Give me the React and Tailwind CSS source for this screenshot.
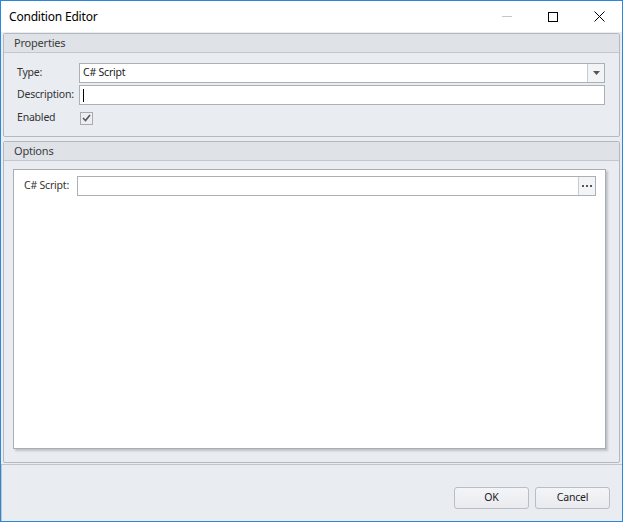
import React from "react";

const font = { fontFamily: '"Segoe UI", "Noto Sans", "Open Sans", sans-serif' };

function GroupHeader({ children }) {
  return (
    <div className="h-[19px] bg-[#dfe2e7] border-b border-[#c3c6cc] flex items-center pl-[10px] text-[11px] tracking-[-0.2px] text-[#3c3c3c]">
      {children}
    </div>
  );
}

export default function App() {
  return (
    <div
      className="w-[623px] h-[522px] border border-[#2b88d8] bg-[#e9ecf1] flex flex-col text-[#333] overflow-hidden"
      style={font}
    >
      {/* Title bar */}
      <div className="h-[31px] bg-white flex items-center relative shrink-0">
        <span className="ml-[8px] text-[12px] tracking-[-0.2px] text-black">Condition Editor</span>
        <div className="ml-auto flex items-center h-full">
          <div className="w-[46px] h-full flex items-center justify-center">
            <div className="w-[10px] h-px bg-[#c6c6c6]" />
          </div>
          <div className="w-[46px] h-full flex items-center justify-center">
            <div className="w-[10px] h-[10px] border border-black" />
          </div>
          <div className="w-[46px] h-full flex items-center justify-center">
            <svg width="11" height="11" viewBox="0 0 11 11">
              <path d="M0.5 0.5 L10.5 10.5 M10.5 0.5 L0.5 10.5" stroke="#000" strokeWidth="1" />
            </svg>
          </div>
        </div>
      </div>

      {/* Properties group */}
      <div className="mt-px mx-[2px] h-[104px] border border-[#b4b8bf] rounded-[2px] bg-[#e9ecf1] flex flex-col shrink-0">
        <GroupHeader>Properties</GroupHeader>
        <div className="flex flex-col gap-[2px] pt-[10px] pl-[13px] pr-[14px] text-[10.5px] tracking-[-0.2px]">
          <div className="flex items-center h-[20px]">
            <span className="w-[62px]">Type:</span>
            <div className="flex-1 h-[20px] bg-white border border-[#abafb6] flex items-center">
              <span className="pl-[3px] text-[#1a1a1a]">C# Script</span>
              <div className="ml-auto w-[17px] h-full border-l border-[#c8cbd0] bg-[#f3f4f6] flex items-center justify-center">
                <svg width="7" height="4" viewBox="0 0 7 4">
                  <path d="M0 0 H7 L3.5 4 Z" fill="#555" />
                </svg>
              </div>
            </div>
          </div>
          <div className="flex items-center h-[20px]">
            <span className="w-[62px]">Description:</span>
            <div className="flex-1 h-[20px] bg-white border border-[#abafb6] flex items-center">
              <div className="ml-[3px] w-px h-[13px] bg-black" />
            </div>
          </div>
          <div className="flex items-center h-[20px] mt-px">
            <span className="w-[63px]">Enabled</span>
            <div className="w-[13px] h-[13px] border border-[#a7aab0] bg-[#eceef1] flex items-center justify-center">
              <svg width="9" height="8" viewBox="0 0 9 8">
                <path d="M1 4 L3.5 6.5 L8 1" stroke="#5a5a5a" strokeWidth="1.7" fill="none" />
              </svg>
            </div>
          </div>
        </div>
      </div>

      {/* Options group */}
      <div className="mt-[4px] mx-[2px] h-[322px] border border-[#b4b8bf] rounded-[2px] bg-[#e9ecf1] flex flex-col shrink-0">
        <GroupHeader>Options</GroupHeader>
        <div className="flex-1 pt-[8px] pl-[9px] pr-[13px] pb-[13px] flex">
          <div className="flex-1 bg-white border border-[#a8acb3] shadow-[2px_2px_2px_rgba(0,0,0,0.18)] pt-[6px] pl-[10px] pr-[9px] text-[10.5px] tracking-[-0.2px]">
            <div className="flex items-center h-[20px]">
              <span className="w-[53px]">C# Script:</span>
              <div className="flex-1 h-[20px] bg-white border border-[#abafb6] flex items-center">
                <div className="ml-auto w-[17px] h-full border-l border-[#c8cbd0] bg-[#f3f4f6] flex items-center justify-center gap-[2px]">
                  <div className="w-[2px] h-[2px] bg-[#555]" />
                  <div className="w-[2px] h-[2px] bg-[#555]" />
                  <div className="w-[2px] h-[2px] bg-[#555]" />
                </div>
              </div>
            </div>
          </div>
        </div>
      </div>

      {/* Bottom panel */}
      <div className="mt-px flex-1 border-t border-l border-[#c2c5cb] bg-[#e9ecf1] flex justify-end items-start pr-[12px] pt-[22px] gap-[6px] text-[10.5px] tracking-[-0.2px]">
        <button className="w-[75px] h-[22px] rounded-[3px] border border-[#babdc3] bg-gradient-to-b from-[#f4f5f7] to-[#e9ebef] text-[#222]">
          OK
        </button>
        <button className="w-[75px] h-[22px] rounded-[3px] border border-[#babdc3] bg-gradient-to-b from-[#f4f5f7] to-[#e9ebef] text-[#222]">
          Cancel
        </button>
      </div>
    </div>
  );
}
